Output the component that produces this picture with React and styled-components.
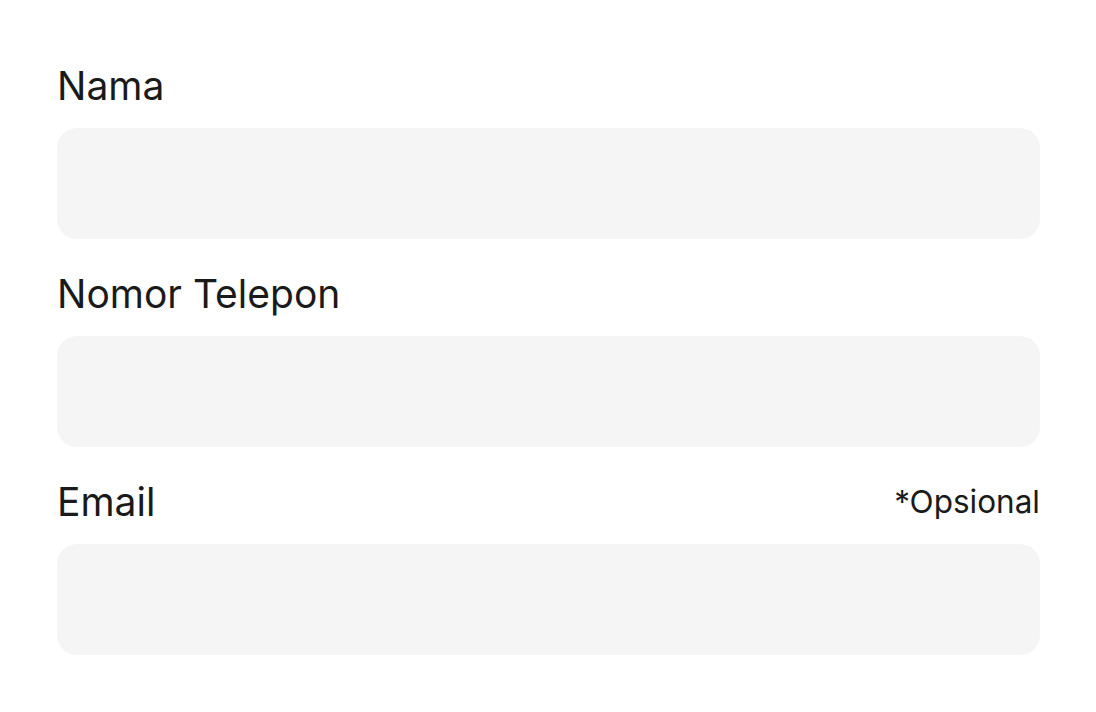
import styled, { createGlobalStyle } from "styled-components";

const GlobalStyle = createGlobalStyle`
  body {
    margin: 0;
    background: #ffffff;
    font-family: Inter, "Noto Sans", sans-serif;
  }
`;

const Form = styled.form`
  display: flex;
  flex-direction: column;
  gap: 32px;
  padding: 63px 56px 0 57px;
`;

const Field = styled.div`
  display: flex;
  flex-direction: column;
  gap: 19px;
`;

const LabelRow = styled.div`
  display: flex;
  justify-content: space-between;
  align-items: baseline;
`;

const Label = styled.label`
  font-size: 39px;
  line-height: 46px;
  font-weight: 400;
  color: #1a1a1a;
`;

const Hint = styled.span`
  font-size: 31.5px;
  line-height: 36px;
  color: #1a1a1a;
  position: relative;
  top: -3px;
`;

const Input = styled.input`
  box-sizing: border-box;
  height: 111px;
  width: 100%;
  border: none;
  outline: none;
  border-radius: 20px;
  background: #f5f5f5;
  padding: 0 28px;
  font-family: inherit;
  font-size: 32px;
  color: #1a1a1a;
`;

const fields = [
  { id: "nama", label: "Nama", type: "text" },
  { id: "telepon", label: "Nomor Telepon", type: "tel" },
  { id: "email", label: "Email", type: "email", hint: "*Opsional" },
];

export default function App() {
  return (
    <>
      <GlobalStyle />
      <Form onSubmit={(e) => e.preventDefault()}>
        {fields.map((f) => (
          <Field key={f.id}>
            <LabelRow>
              <Label htmlFor={f.id}>{f.label}</Label>
              {f.hint && <Hint>{f.hint}</Hint>}
            </LabelRow>
            <Input id={f.id} type={f.type} />
          </Field>
        ))}
      </Form>
    </>
  );
}
